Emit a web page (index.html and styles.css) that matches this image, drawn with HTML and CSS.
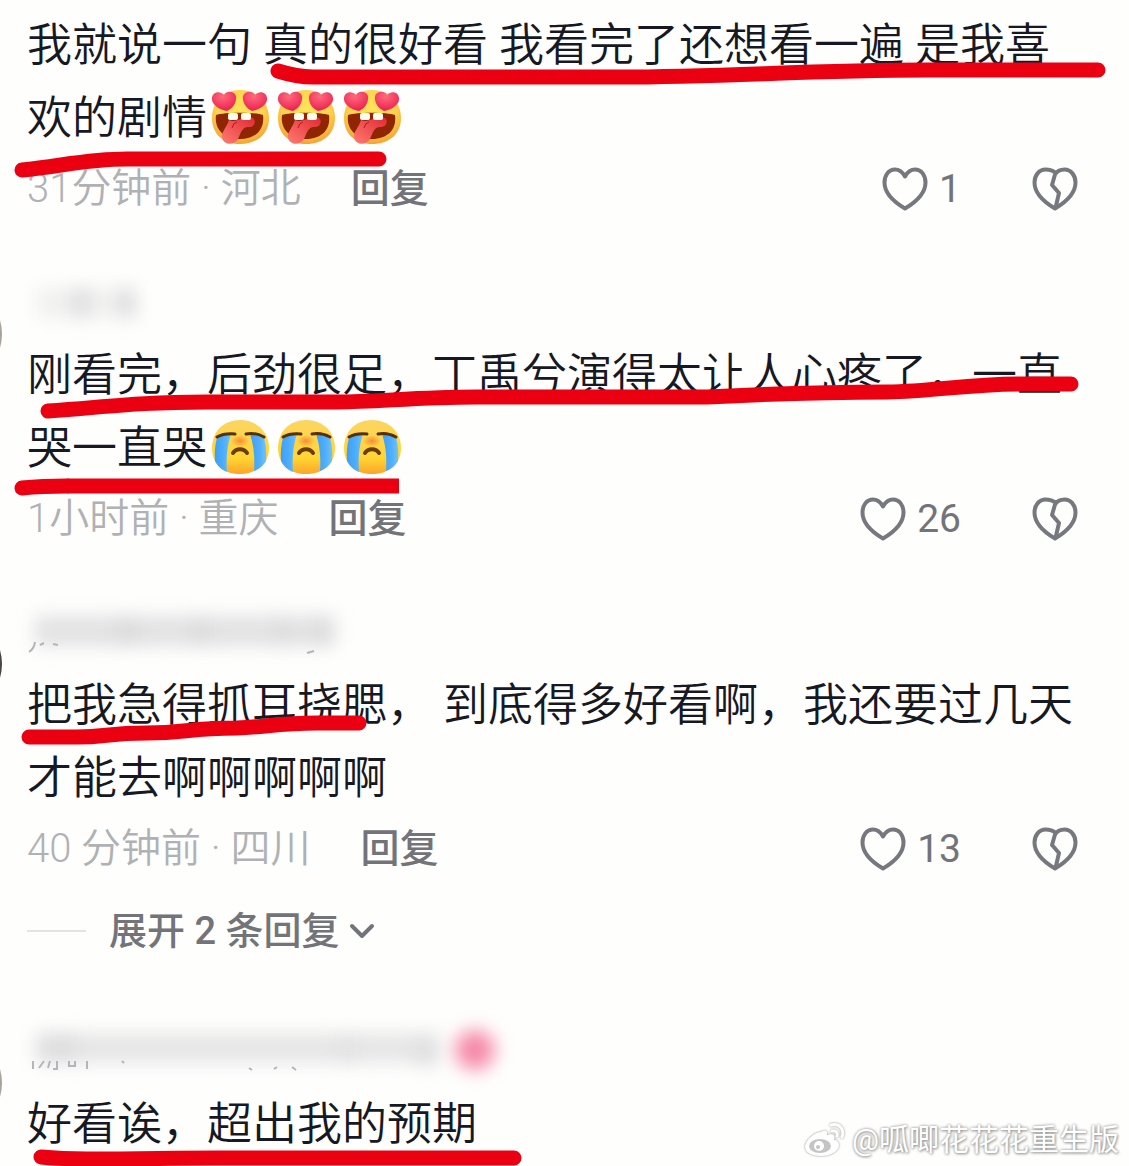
FILE: index.html
```html
<!DOCTYPE html>
<html lang="zh-CN">
<head>
    <meta charset="UTF-8">
    <meta name="viewport" content="width=device-width, initial-scale=1.0">
    <title>评论</title>
    <link rel="stylesheet" href="styles.css">
</head>
<body>
    <!-- Shared icons -->
    <svg class="sprite" aria-hidden="true">
        <defs>
            <radialGradient id="face" cx="50%" cy="35%" r="65%">
                <stop offset="0" stop-color="#ffe45c"/>
                <stop offset="0.65" stop-color="#fdd04b"/>
                <stop offset="1" stop-color="#f5a335"/>
            </radialGradient>
            <linearGradient id="cryFace" x1="0" y1="0" x2="0" y2="1">
                <stop offset="0" stop-color="#fbd562"/>
                <stop offset="0.7" stop-color="#ffd633"/>
                <stop offset="1" stop-color="#fba529"/>
            </linearGradient>
            <linearGradient id="tear" x1="0" y1="0" x2="1" y2="0">
                <stop offset="0" stop-color="#3f9ef5"/>
                <stop offset="0.6" stop-color="#4fb0fb"/>
                <stop offset="1" stop-color="#74c3f2"/>
            </linearGradient>
            <linearGradient id="tongue" x1="1" y1="0" x2="0" y2="1">
                <stop offset="0" stop-color="#e02a32"/>
                <stop offset="1" stop-color="#ff7a72"/>
            </linearGradient>
            <radialGradient id="loveHeart" cx="45%" cy="25%" r="75%">
                <stop offset="0" stop-color="#ff6a7e"/>
                <stop offset="1" stop-color="#ec1f4d"/>
            </radialGradient>
            <radialGradient id="blush">
                <stop offset="0" stop-color="#f98b35"/>
                <stop offset="1" stop-color="#f98b35" stop-opacity="0"/>
            </radialGradient>
        </defs>
        <symbol id="heart" viewBox="0 0 46 44">
            <path d="M23 9.500C20.500 5 17 2.500 13 2.500C6.500 2.500 2.500 8.500 2.500 15.500C2.500 26 12 35 23 41.500C34 35 43.500 26 43.500 15.500C43.500 8.500 39.500 2.500 33 2.500C29 2.500 25.500 5 23 9.500Z"/>
        </symbol>
        <symbol id="broken" viewBox="0 0 46 44">
            <path d="M24 6C21 3.500 17 2.500 13.500 2.500C7 2.500 2.500 8.500 2.500 15.500C2.500 26 12 35 23 41.500C34 35 43.500 26 43.500 15.500C43.500 8.500 39 2.500 32.500 2.500C29 2.500 25 4 23 7.500L20 18L27 26L23.500 41"/>
        </symbol>
        <symbol id="love" viewBox="0 0 66 56">
            <path fill="url(#face)" d="M33 0C50 0 62 12 62 28C62 44 50 54 33 54C16 54 5 44 5 28C5 12 16 0 33 0Z"/>
            <path fill="#8f2503" d="M9 25C17 22 48 22 56 25C58 40 48 49 33 49C18 49 7 40 9 25Z"/>
            <path fill="url(#tongue)" d="M22 30C30 34 38 24 46 28C50 31 47 38 41 37C35 37 34 43 31 49C27 56 17 55 15 48C14 42 20 37 22 30Z"/>
            <path fill="none" stroke="#b91620" stroke-width="1" d="M30 32Q26 33 25 38"/>
            <rect x="21" y="23" width="10" height="7" rx="2" fill="#fffaf2"/>
            <rect x="34" y="23" width="10" height="7" rx="2" fill="#fffaf2"/>
            <path fill="url(#loveHeart)" d="M17 5C18 1 27 0 29 6C30 13 25 19 20 21C14 20 6 16 5 10C4 2 13 0 17 5Z"/>
            <path fill="url(#loveHeart)" d="M48 5C47 1 38 0 36 6C35 13 40 19 45 21C51 20 59 16 60 10C61 2 52 0 48 5Z"/>
        </symbol>
        <symbol id="cry" viewBox="0 0 66 56">
            <path fill="url(#cryFace)" d="M33 0C50 0 62 12 62 28C62 44 50 54 33 54C16 54 5 44 5 28C5 12 16 0 33 0Z"/>
            <path fill="url(#tear)" d="M10 18Q17 13 24 14C20 26 19 39 20 52Q12 49 8 41Q7 28 10 18Z"/>
            <path fill="url(#tear)" d="M57 18Q50 13 43 14C47 26 48 39 47 51Q55 48 59 41Q60 28 57 18Z"/>
            <ellipse cx="33" cy="21" rx="9" ry="6" fill="url(#blush)"/>
            <path fill="none" stroke="#55300b" stroke-width="3" stroke-linecap="round" d="M10 17Q17 13 28 14M39 14Q48 12 57 17"/>
            <path fill="none" stroke="#6b3d05" stroke-width="4" stroke-linecap="round" d="M26 33C29 28 37 28 40 33"/>
        </symbol>
    </svg>

    <main class="comments">
        <article class="comment">
            <div class="text">
                <p>我就说一句 真的很好看 我看完了还想看一遍 是我喜欢的剧情<svg class="emoji"><use href="#love"/></svg><svg class="emoji"><use href="#love"/></svg><svg class="emoji"><use href="#love"/></svg></p>
                <svg class="marker"><path d="M251 62Q270 68 286 68H592C700 68 780 61 900 61H1071M-5 161C35 157 60 150 100 150H352"/></svg>
            </div>
            <div class="meta">
                <span class="time">31分钟前 · 河北</span>
                <button class="reply">回复</button>
                <button class="like" aria-label="点赞 1"><svg class="icon"><use href="#heart"/></svg><span>1</span></button>
                <button class="dislike" aria-label="不喜欢"><svg class="icon"><use href="#broken"/></svg></button>
            </div>
        </article>

        <article class="comment">
            <div class="avatar"></div>
            <div class="name">
                <svg class="smudge" viewBox="0 0 540 60"><g class="haze"><path d="M10 20H110" opacity="0.3"/><path d="M46 20H62M92 20H108" opacity="0.6"/></g></svg>
            </div>
            <div class="text">
                <p>刚看完，后劲很足，丁禹兮演得太让人心疼了，一直哭一直哭<svg class="emoji"><use href="#cry"/></svg><svg class="emoji"><use href="#cry"/></svg><svg class="emoji"><use href="#cry"/></svg></p>
                <svg class="marker"><path d="M21 72C80 68 110 63 180 63H310C350 63 390 58 450 58H680C740 55 800 53 860 53C910 52 940 45 995 45H1044"/><path d="M-5 149Q15 147 40 147"/><path class="flat" d="M40 147H372"/></svg>
            </div>
            <div class="meta">
                <span class="time">1小时前 · 重庆</span>
                <button class="reply">回复</button>
                <button class="like" aria-label="点赞 26"><svg class="icon"><use href="#heart"/></svg><span>26</span></button>
                <button class="dislike" aria-label="不喜欢"><svg class="icon"><use href="#broken"/></svg></button>
            </div>
        </article>

        <article class="comment">
            <div class="avatar dark"></div>
            <div class="name">
                <svg class="smudge" viewBox="0 0 540 60"><g class="haze"><path d="M8 18H308" opacity="0.6"/><path d="M90 18H110M165 18H182M250 18H262M288 18H304" opacity="0.4"/></g><path class="rest" d="M2 39Q7 36 8 29M13 32L17 30M26 31L31 32M280 40L287 38"/></svg>
            </div>
            <div class="text">
                <p>把我急得抓耳挠腮， 到底得多好看啊，我还要过几天才能去啊啊啊啊啊</p>
                <svg class="marker"><path d="M2 68H50C80 68 80 64 120 64C160 64 160 59 210 59C240 58 250 54 290 54H332"/></svg>
            </div>
            <div class="meta">
                <span class="time">40 分钟前 · 四川</span>
                <button class="reply">回复</button>
                <button class="like" aria-label="点赞 13"><svg class="icon"><use href="#heart"/></svg><span>13</span></button>
                <button class="dislike" aria-label="不喜欢"><svg class="icon"><use href="#broken"/></svg></button>
            </div>
            <button class="expand">
                展开 2 条回复
                <svg class="chevron" viewBox="0 0 26 18"><path d="M3 4L13 14L23 4"/></svg>
            </button>
        </article>

        <article class="comment">
            <div class="avatar"></div>
            <div class="name">
                <svg class="smudge" viewBox="0 0 540 60"><g class="haze"><path d="M8 16H412" opacity="0.5"/><path d="M14 16H50M315 18H325M390 20H410" opacity="0.4"/><circle class="pink" cx="448" cy="18" r="20"/></g><path class="rest" d="M6 29V37M12 36L17 29M23 29L21 36M30 29V37H26M42 29V34H48V29M60 29V37M95 29L97 31M222 36L225 38M247 37L250 35M265 35L269 38"/></svg>
            </div>
            <div class="text">
                <p>好看诶，超出我的预期</p>
                <svg class="marker"><path d="M14 69Q35 71 60 71C120 71 140 70 190 70H487"/></svg>
            </div>
        </article>

        <div class="watermark">
            <svg viewBox="0 0 42 36">
                <path d="M17 10C10 10 1 19 1 25C1 31 9 34 17 34C27 34 35 29 35 23C35 20 33 18 30 18C32 13 28 11 23 13C24 8 21 8 17 10Z"/>
                <ellipse class="eye" cx="16" cy="24" rx="11" ry="7"/>
                <circle cx="15" cy="24" r="5"/>
                <circle class="eye" cx="14" cy="25" r="2"/>
                <path class="wave" d="M27 3C35 1 41 7 38 15M28 9C32 8 34 11 33 14"/>
            </svg>
            <span>@呱唧花花花重生版</span>
        </div>
    </main>
</body>
</html>
```
FILE: styles.css
```css
* {
    margin: 0;
    padding: 0;
    box-sizing: border-box;
}

body {
    background: #fefefd;
    color: #161823;
    font-family: Roboto, "Noto Sans CJK SC", sans-serif;
}

button {
    background: none;
    border: none;
    font: inherit;
    color: #737479;
    cursor: pointer;
}

.sprite {
    position: absolute;
    width: 0;
    height: 0;
}

.comments {
    position: relative;
    min-height: 100vh;
    padding: 9px 51px 0 27px;
    overflow: hidden;
}

.comment {
    position: relative;
    margin-bottom: 68px;
}

.comment:last-of-type {
    margin-bottom: 0;
}

/* Only the edge of the avatar shows */
.avatar {
    position: absolute;
    top: 1px;
    left: -125px;
    width: 100px;
    height: 100px;
    border-radius: 50%;
    background: #a8a49d;
    clip-path: inset(36px 0 0 0);
}

.avatar.dark {
    background: #4a4644;
}

.name {
    position: relative;
    height: 40px;
    margin-bottom: 16px;
}

.smudge {
    position: absolute;
    top: 0;
    left: 0;
    width: 540px;
    height: 60px;
    overflow: visible;
}

.haze {
    filter: blur(9px);
    stroke: #cfcfd2;
    stroke-width: 30;
}

.pink {
    fill: #f58aa8;
    stroke: none;
}

.rest {
    fill: none;
    stroke: #b4b5b8;
    stroke-width: 2;
}

.text {
    position: relative;
    font-size: 45px;
    line-height: 73px;
    font-weight: 350;
}

/* Red pen lines over the text */
.marker {
    position: absolute;
    top: 0;
    left: 0;
    width: 100%;
    height: 100%;
    overflow: visible;
    fill: none;
    stroke: #eb0012;
    stroke-width: 15;
    stroke-linecap: round;
    stroke-linejoin: round;
    pointer-events: none;
}

.marker .flat {
    stroke-linecap: butt;
}

.emoji {
    width: 66px;
    height: 56px;
    vertical-align: -12px;
}

.meta {
    display: flex;
    align-items: center;
    height: 52px;
    margin-top: 8px;
    font-size: 39px;
    line-height: 52px;
}

.time {
    color: #b0b1b4;
    font-size: 40px;
    font-weight: 350;
}

.reply {
    margin-left: 50px;
    font-weight: 500;
}

.like {
    display: flex;
    align-items: center;
    gap: 11px;
    margin-left: auto;
}

.dislike {
    display: flex;
    margin-left: 71px;
}

.icon {
    width: 46px;
    height: 44px;
    fill: none;
    stroke: #77787d;
    stroke-width: 4;
    stroke-linejoin: round;
}

.expand {
    display: flex;
    align-items: center;
    gap: 9px;
    margin: 30px 0 75px;
    font-size: 38px;
    line-height: 52px;
    font-weight: 500;
}

.expand::before {
    content: "";
    width: 59px;
    height: 2px;
    margin-right: 14px;
    background: #e3e3e4;
}

.chevron {
    width: 26px;
    height: 18px;
    fill: none;
    stroke: #737479;
    stroke-width: 4;
    stroke-linecap: round;
    stroke-linejoin: round;
}

.watermark {
    position: absolute;
    right: 10px;
    bottom: 6px;
    display: flex;
    align-items: center;
    gap: 6px;
    color: #fff;
    font-size: 30px;
    line-height: 40px;
    text-shadow: 0 0 3px #8c8c8c, 1px 1px 3px #a0a0a0;
}

.watermark svg {
    width: 42px;
    height: 36px;
    fill: #fff;
    filter: drop-shadow(0 0 1px #909090);
}

.watermark .eye {
    fill: #c4c4c4;
}

.watermark .wave {
    fill: none;
    stroke: #fff;
    stroke-width: 3;
    stroke-linecap: round;
}
```
